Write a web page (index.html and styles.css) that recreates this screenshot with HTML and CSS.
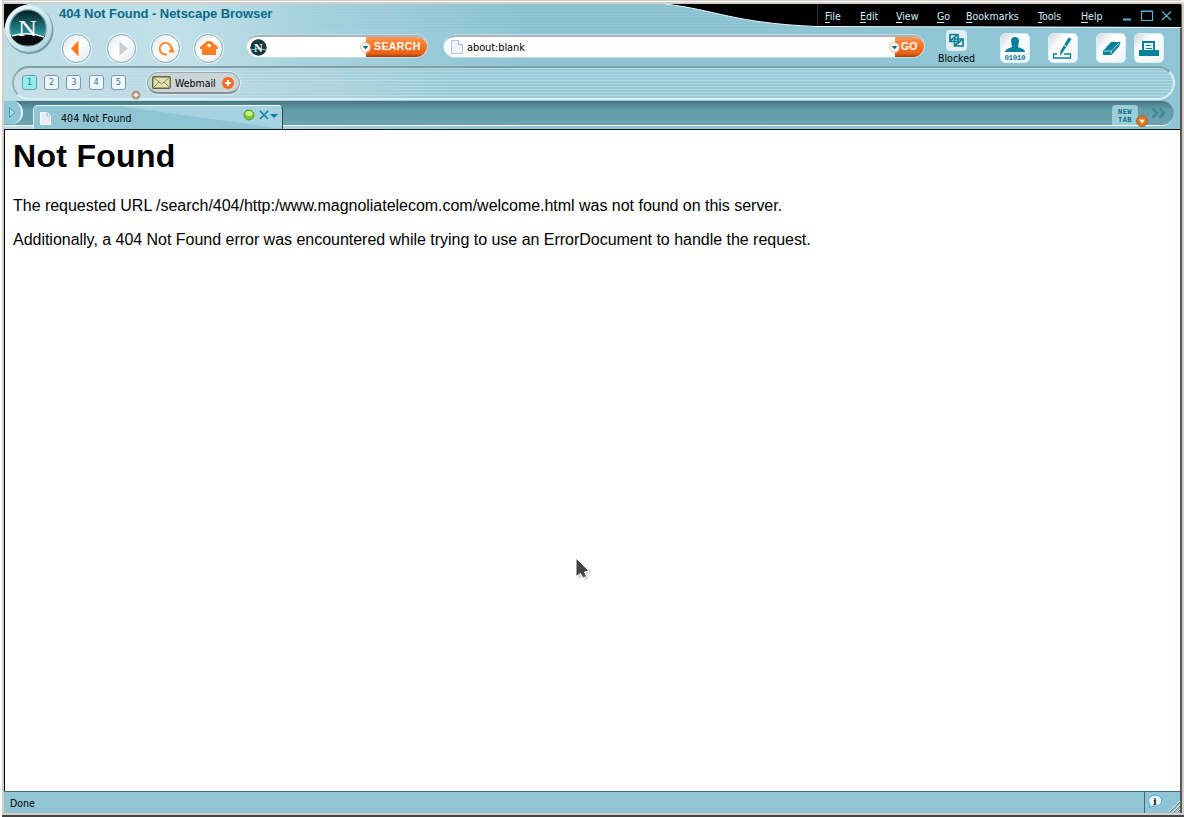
FILE: index.html
```html
<!DOCTYPE html>
<html lang="en">
<head>
<meta charset="utf-8">
<title>404 Not Found - Netscape Browser</title>
<link rel="stylesheet" href="styles.css">
</head>
<body>
<div class="window">
<header class="chrome">
  <svg class="swoop" width="540" height="26" viewBox="0 0 540 26"><path d="M24 0C75 6 93 19 175 22.500L540 23V0Z" fill="#000"/><path d="M24 0C75 6 93 19 175 22.500L540 23.500" fill="none" stroke="#edfafd"/><path d="M176.500 0V22" stroke="#333"/></svg>
  <svg class="logo" width="54" height="55" viewBox="0 0 54 55">
    <defs><linearGradient id="ring" x2="1" y2="1"><stop stop-color="#f1ffff"/><stop offset=".65" stop-color="#c3e3e9"/><stop offset="1" stop-color="#a5c9d1"/></linearGradient><linearGradient id="lens" x2="0" y2="1"><stop stop-color="#021d22"/><stop offset=".65" stop-color="#24949a"/><stop offset="1" stop-color="#80bdc0"/></linearGradient></defs>
    <path d="M0 0H24Q8 3 2 18L0 25Z" fill="#050b0c"/><circle cx="25.500" cy="26" r="24" fill="#5c8590" opacity=".75"/><circle cx="24.500" cy="24.500" r="23.500" fill="url(#ring)"/><circle cx="24" cy="24" r="18.800" fill="#79969e"/><circle cx="24" cy="24" r="17.500" fill="url(#lens)"/><path d="M7 32Q24 28 41 32Q36 41.500 24 41.500T7 32Z" fill="#080c0e"/><path d="M8 32Q24 27 40 33" fill="none" stroke="#eaffff" stroke-width="1.500"/><text x="14" y="32" class="logo-n" textLength="19" lengthAdjust="spacingAndGlyphs">N</text></svg>
  <div class="titlebar">
    <h2 class="title">404 Not Found - Netscape Browser</h2>
    <nav class="menu"><span><u>F</u>ile</span><span><u>E</u>dit</span><span><u>V</u>iew</span><span><u>G</u>o</span><span><u>B</u>ookmarks</span><span><u>T</u>ools</span><span><u>H</u>elp</span></nav>
    <svg class="controls" width="50" height="12" fill="none" stroke="#55b5ce"><path d="M1 9.500H9" stroke-width="2"/><path d="M19.500 1H30.500V10.500H19.500ZM19 1.500H31M40 1.500L49 10M49 1.500L40 10" stroke-width="1.200"/></svg>
  </div>
  <div class="toolbar">
    <div class="rounds">
      <span class="round"><svg width="28" height="28"><path d="M8 14.500L15.500 6.500V22.500Z" fill="#ff7918"/></svg></span>
      <span class="round"><svg width="28" height="28"><path d="M20 14.500L11.500 7.500V21.500Z" fill="#c9cdd0"/></svg></span>
      <span class="round"><svg width="28" height="28"><path d="M15 20.300A5.800 5.800 0 1 1 19.300 14.500" fill="none" stroke="#ff8427" stroke-width="1.900"/><path d="M20 12L22.500 18.500H16.500Z" fill="#ff8427"/></svg></span>
      <span class="round"><svg width="28" height="28"><path d="M12 7H16L23 13V15H21V21H7V15H5V13Z" fill="#ff7f27"/><circle cx="14" cy="11.500" r="1.800" fill="#fff"/></svg></span>
    </div>
    <div class="field search">
      <svg width="17" height="17"><circle cx="8.500" cy="8.500" r="8.200" fill="#17383e"/><path d="M1 11Q8 8 16 11" stroke="#7bd5d8" fill="none"/><text x="4" y="12.500" class="mini-n">N</text></svg>
      <svg class="drop" width="11" height="11"><circle cx="5.500" cy="5.500" r="4.800" fill="#fff" stroke="#ffad7b"/><path d="M2.500 4H8.500L5.500 7.500Z" fill="#08738a"/></svg>
      <b class="orange">SEARCH</b>
    </div>
    <div class="field url">
      <svg width="12" height="14"><path d="M.5.5H7.500L11.500 4.500V13.500H.5Z" fill="#eef3ff" stroke="#b7c3e0"/><path d="M7.500.5V4.500H11.500" fill="#fff" stroke="#a7b6d7"/></svg>
      <span class="address">about:blank</span>
      <svg class="drop" width="11" height="11"><circle cx="5.500" cy="5.500" r="4.800" fill="#fff" stroke="#ffad7b"/><path d="M2.500 4H8.500L5.500 7.500Z" fill="#08738a"/></svg>
      <b class="orange go">GO</b>
    </div>
    <div class="blocked"><svg width="21" height="21"><rect x=".5" y=".5" width="20" height="20" rx="3" fill="#e7edf1" stroke="#d4f1f7"/><path d="M4 4.500H12V11.500H4ZM8.500 9H17V16H8.500Z" fill="none" stroke="#078098" stroke-width="1.700"/><path d="M4 11L11 5M9 15.500L16 9.500" stroke="#078098" stroke-width="1.700"/></svg><span>Blocked</span></div>
    <div class="tiles">
      <svg class="tile" viewBox="0 0 28 28"><path d="M10 7Q10 3 14 3T18 7L17 13L22 15Q24 16 24 18H4Q4 16 6 15L11 13Z" fill="#08819a"/><text x="3.500" y="25.500" class="bits" textLength="21">01010</text></svg>
      <svg class="tile" viewBox="0 0 28 28"><path d="M8 20H4.500V24H21.500V20H15" fill="none" stroke="#08819a" stroke-width="1.300"/><path d="M19.500 3.500L22.500 5L14 18L11 22L11.500 17Z" fill="#08819a"/><path d="M15 11L18 13" stroke="#fff"/></svg>
      <svg class="tile" viewBox="0 0 28 28"><path d="M6 17L14 8H23.500L22 12.500L14.500 21H6Z" fill="#08819a"/><path d="M7 17H14.500L22 9M14.500 17L14 20" fill="none" stroke="#c0edf2" stroke-width=".8"/></svg>
      <svg class="tile" viewBox="0 0 28 28"><path d="M7 7H20V16H24V22H4V16H7Z" fill="#08819a"/><path d="M9 9H18V16H9Z" fill="#edf9fa"/><path d="M11 11.500H16M11 14.500H17" stroke="#08819a"/></svg>
    </div>
  </div>
  <div class="links">
    <span class="num active">1</span><span class="num">2</span><span class="num">3</span><span class="num">4</span><span class="num">5</span>
    <svg class="plus-small" width="10" height="10"><circle cx="5" cy="5" r="4.500" fill="#b1967d"/><path d="M2.500 5H7.500M5 2.500V7.500" stroke="#fff" stroke-width="1.300"/></svg>
    <span class="webmail"><svg width="19" height="13"><rect x=".7" y=".7" width="17.500" height="11.500" rx="1" fill="#e3e2b4" stroke="#65663b" stroke-width="1.400"/><path d="M1.500 1.500L9.500 8L17.500 1.500M1.500 11.500L7 6M17.500 11.500L12 6" fill="none" stroke="#85865c"/></svg><span>Webmail</span><svg width="12" height="12"><circle cx="6" cy="6" r="6" fill="#f76a1b"/><path d="M3 6H9M6 3V9" stroke="#fff" stroke-width="2"/></svg></span>
  </div>
  <div class="tabs">
    <span class="side"><svg width="18" height="22"><path d="M5.500 6.500V16.500L11 11.500Z" fill="#a5e0ed" stroke="#4f94a7"/></svg></span>
    <div class="tab"><svg width="11" height="13"><path d="M.5.5H7L10.500 4V12.500H.5Z" fill="#e7edff" stroke="#fff"/><path d="M7 .5V4H10.500" fill="#fff" stroke="#9cafd4"/></svg><span class="tab-name">404 Not Found</span><svg class="tab-controls" width="36" height="14"><circle cx="6" cy="7" r="5" fill="#79c829" stroke="#559733"/><ellipse cx="6" cy="5.500" rx="3.500" ry="2.500" fill="#c8f47c"/><path d="M17 3L25 11M25 3L17 11" stroke="#087f9e" stroke-width="1.500"/><path d="M27 6H35L31 10Z" fill="#087f9e"/></svg></div>
    <div class="strip"><span class="newtab">NEW<br>TAB</span><svg class="chevrons" width="16" height="12"><path d="M1.500 1.500L6 6L1.500 10.500M8.500 1.500L13 6L8.500 10.500" fill="none" stroke="#41879a" stroke-width="2.500"/></svg><svg class="ball" width="12" height="12"><circle cx="6" cy="6" r="5.500" fill="#e5731c" stroke="#9e6744"/><path d="M3 4.500H9L6 8.500Z" fill="#fff"/></svg></div>
  </div>
</header>
<main class="page"><h1>Not Found</h1><p>The requested URL /search/404/http:/www.magnoliatelecom.com/welcome.html was not found on this server.</p><p>Additionally, a 404 Not Found error was encountered while trying to use an ErrorDocument to handle the request.</p></main>
<footer class="status"><span class="done">Done</span><span class="info"><svg width="36" height="20"><path d="M4 15.500L5.500 12.500A6.500 5.500 0 1 1 8.500 14Z" fill="#f0fbff" stroke="#45aeea"/><text x="8" y="12.500" class="i">i</text><path d="M24 20L35 9M28 20L35 13M32 20L35 17" stroke="#f4f4f4"/><path d="M25 20L36 9M29 20L36 13M33 20L36 17" stroke="#777"/></svg></span></footer>
</div>
<svg class="cursor" width="20" height="26"><path d="M4 3V22L8.500 19L11 23L14.500 21L13 17L17 15Z" fill="#999" opacity=".45"/><path d="M2 1V19.500L6.500 16.500L9 21L12.500 19.500L10.500 15L15 14Z" fill="#444" stroke="#fff"/></svg>
</body>
</html>
```
FILE: styles.css
```css
*{box-sizing:border-box}
body{margin:0;background:#fff;font-family:"DejaVu Sans Condensed","DejaVu Sans",sans-serif;font-size:10px;color:#000;overflow:hidden}
svg{display:block;flex:none}
.window{position:relative;width:1182px;height:817px;margin-left:2px;display:flex;flex-direction:column;border:solid #d4cec9;border-width:4px 2px;border-top-right-radius:5px;box-shadow:inset -2px 0 #555;padding-right:2px}
.window::before{content:"";position:absolute;left:0;right:0;top:-3px;height:1px;background:#fff}
.window::after{content:"";position:absolute;left:-2px;right:-2px;bottom:-4px;height:2px;background:#444}
.chrome{position:relative;height:126px;flex:none;display:flex;flex-direction:column;background:linear-gradient(90deg,#d4e9f0aa 0,#cce6eecc 180px,#b4d9e3aa 300px,#8fc5d400 520px),repeating-linear-gradient(#8fc5d4 0 2px,#87bfce 2px 3px) top/735px 26px no-repeat,#8fc5d4;border-bottom:1px solid #112}
.swoop{position:absolute;right:-1px;top:0;width:540px}
.logo{position:absolute;left:0;top:0}
.logo-n{font:24px "Liberation Serif",serif;fill:#fff}
.mini-n{font:bold 12px "Liberation Serif",serif;fill:#fff}
.titlebar{position:relative;display:flex;height:24px;padding-left:55px;align-items:flex-start}
.title{margin:1px 0 0;width:766px;font:bold 13px/17px "Liberation Sans",sans-serif;letter-spacing:-.06px;color:#096b88}
.menu{display:grid;grid-template-columns:35px 36px 41px 29px 72px 43px 41px;color:#d0f1f5;padding-top:6px;line-height:13px;font-size:10.500px}
.menu u{text-underline-offset:2px}
.controls{margin:6px 0 0}
.toolbar{display:flex;height:38px;align-items:flex-start;padding-left:58px;flex:none}
.rounds{display:grid;grid-template-columns:45px 44px 43px 53px;padding-top:5px;margin-top:1px}
.round{width:29px;height:29px;border-radius:50%;border:1px solid #8daab3;background:linear-gradient(135deg,#dfe5e8,#fff 45%,#eef2f3 80%);box-shadow:0 0 0 1px #dff4f9}
.round svg{margin:-1px 0 0}
.field{height:22px;margin-top:7px;background:#fff;border-radius:11px;border-top:2px solid #abb5b9;box-shadow:0 0 0 1px #bde0e8;display:flex;align-items:center;overflow:hidden}
.search{width:180px;padding-left:3px}
.search .drop{margin-left:93px}
.url{width:480px;margin-left:17px;padding-left:7px}
.address{width:422px;margin-left:4px;font-size:11px;padding-top:1px;letter-spacing:-.1px}
.drop{z-index:1}
.orange{flex:1;height:20px;margin-left:-5px;padding-left:8px;font:bold 10.500px/18px "Liberation Sans",sans-serif;letter-spacing:.4px;color:#fff;background:linear-gradient(#ff9650,#fa7424 45%,#e96317 82%,#a43c0a)}
.go{padding-left:6px;letter-spacing:0}
.blocked{display:flex;flex-direction:column;align-items:center;width:37px;margin:2px 0 0 14px;font-size:10.500px;line-height:15px}
.tiles{display:grid;grid-template-columns:48px 48px 38px 30px;margin:5px 0 0 25px}
.tile{width:30px;height:30px;border:1px solid #d4f2f7;border-radius:5px;background:linear-gradient(135deg,#cfd4da,#fff 35%,#eff3f5)}
.bits{font:bold 7.500px "Liberation Mono",monospace;fill:#08819a}
.links{display:flex;width:1163px;height:34px;flex:none;margin-left:8px;border:2px solid #dceff4;border-top-color:#839fa6;border-left-color:#9aafb5;border-radius:17px;background:linear-gradient(90deg,#c8e0e8,#c8e0e888 230px,#d3e5ec00 440px),repeating-linear-gradient(#b2d9e2 0 1px,#9bcbd8 1px 3px);padding:7px 0 0 8px;align-items:flex-start}
.num{width:15px;height:15px;margin-right:7.200px;border:1px solid #7997ab;border-radius:3px;background:#f0f6ff;color:#2a798e;text-align:center;line-height:13px;font-size:9px}
.active{background:#91edf0}
.plus-small{margin:15px 6px 0 -2px}
.webmail{height:22px;width:93px;margin-top:-3px;border:1px solid #9ea9ad;border-bottom:2px solid #858f92;border-radius:11px;background:#cad4d9;display:flex;align-items:center;gap:4px;padding-left:4px;font-size:10.500px;box-shadow:0 0 0 1px #d9eff4}
.webmail>span{width:43px}
.tabs{display:flex;position:relative;height:28px;margin-top:1px;align-items:flex-start;flex:none}
.tabs::before{content:"";position:absolute;left:0;top:0;width:1170px;height:24px;border-radius:0 14px 14px 0;border-bottom:1px solid #fff;background:linear-gradient(#487480,#629ba9 8px,#6ca4b1)}
.side{z-index:1;width:19px;height:23px;border-radius:0 11px 11px 0;border-right:2px solid #dff5f8;background:#8fc7d6}
.tab{z-index:1;display:flex;align-items:center;width:250px;height:24px;margin:4px 0 0 10px;padding-left:6px;border-top:1px solid #e5faff;border-left:1px solid #d9f1f7;border-right:1px solid #294b56;border-radius:5px 5px 0 0;background:linear-gradient(8deg,#8fc5d5 60%,#a6d3df 61%)}
.tab svg:first-child{margin-top:1px}
.tab-name{width:182px;margin:1px 0 0 10px;font-size:10.500px;letter-spacing:.1px}
.tab-controls{margin-top:-6px}
.strip{position:relative;display:flex;width:891px;padding-left:829px}
.newtab{width:26px;height:20px;margin-top:4px;background:#9ccdd9;border-radius:4px 4px 0 0;font:bold 7px/8px "DejaVu Sans Mono",monospace;letter-spacing:.5px;color:#086b83;text-align:center;padding-top:3px}
.chevrons{margin:6px 0 0 13px}
.ball{position:absolute;left:853px;top:14px}
.page{flex:1;background:#fff;padding:8px;border-left:1px solid #000;font:16px "Liberation Sans",sans-serif;letter-spacing:-.022px}
.page h1{font-size:32px;line-height:37px;margin:0 0 22px;letter-spacing:.3px}
.page p{margin:0 0 16px;line-height:18px;white-space:nowrap}
.status{height:22px;flex:none;border-top:1px solid #426976;background:#8fc5d4;display:flex;justify-content:space-between}
.done{padding:5px 0 0 6px;font-size:10.500px}
.info{width:36px;border-left:1px solid #426976}
.i{font:bold 10px "DejaVu Serif",serif;fill:#222}
.cursor{position:absolute;left:574px;top:557px}
```
